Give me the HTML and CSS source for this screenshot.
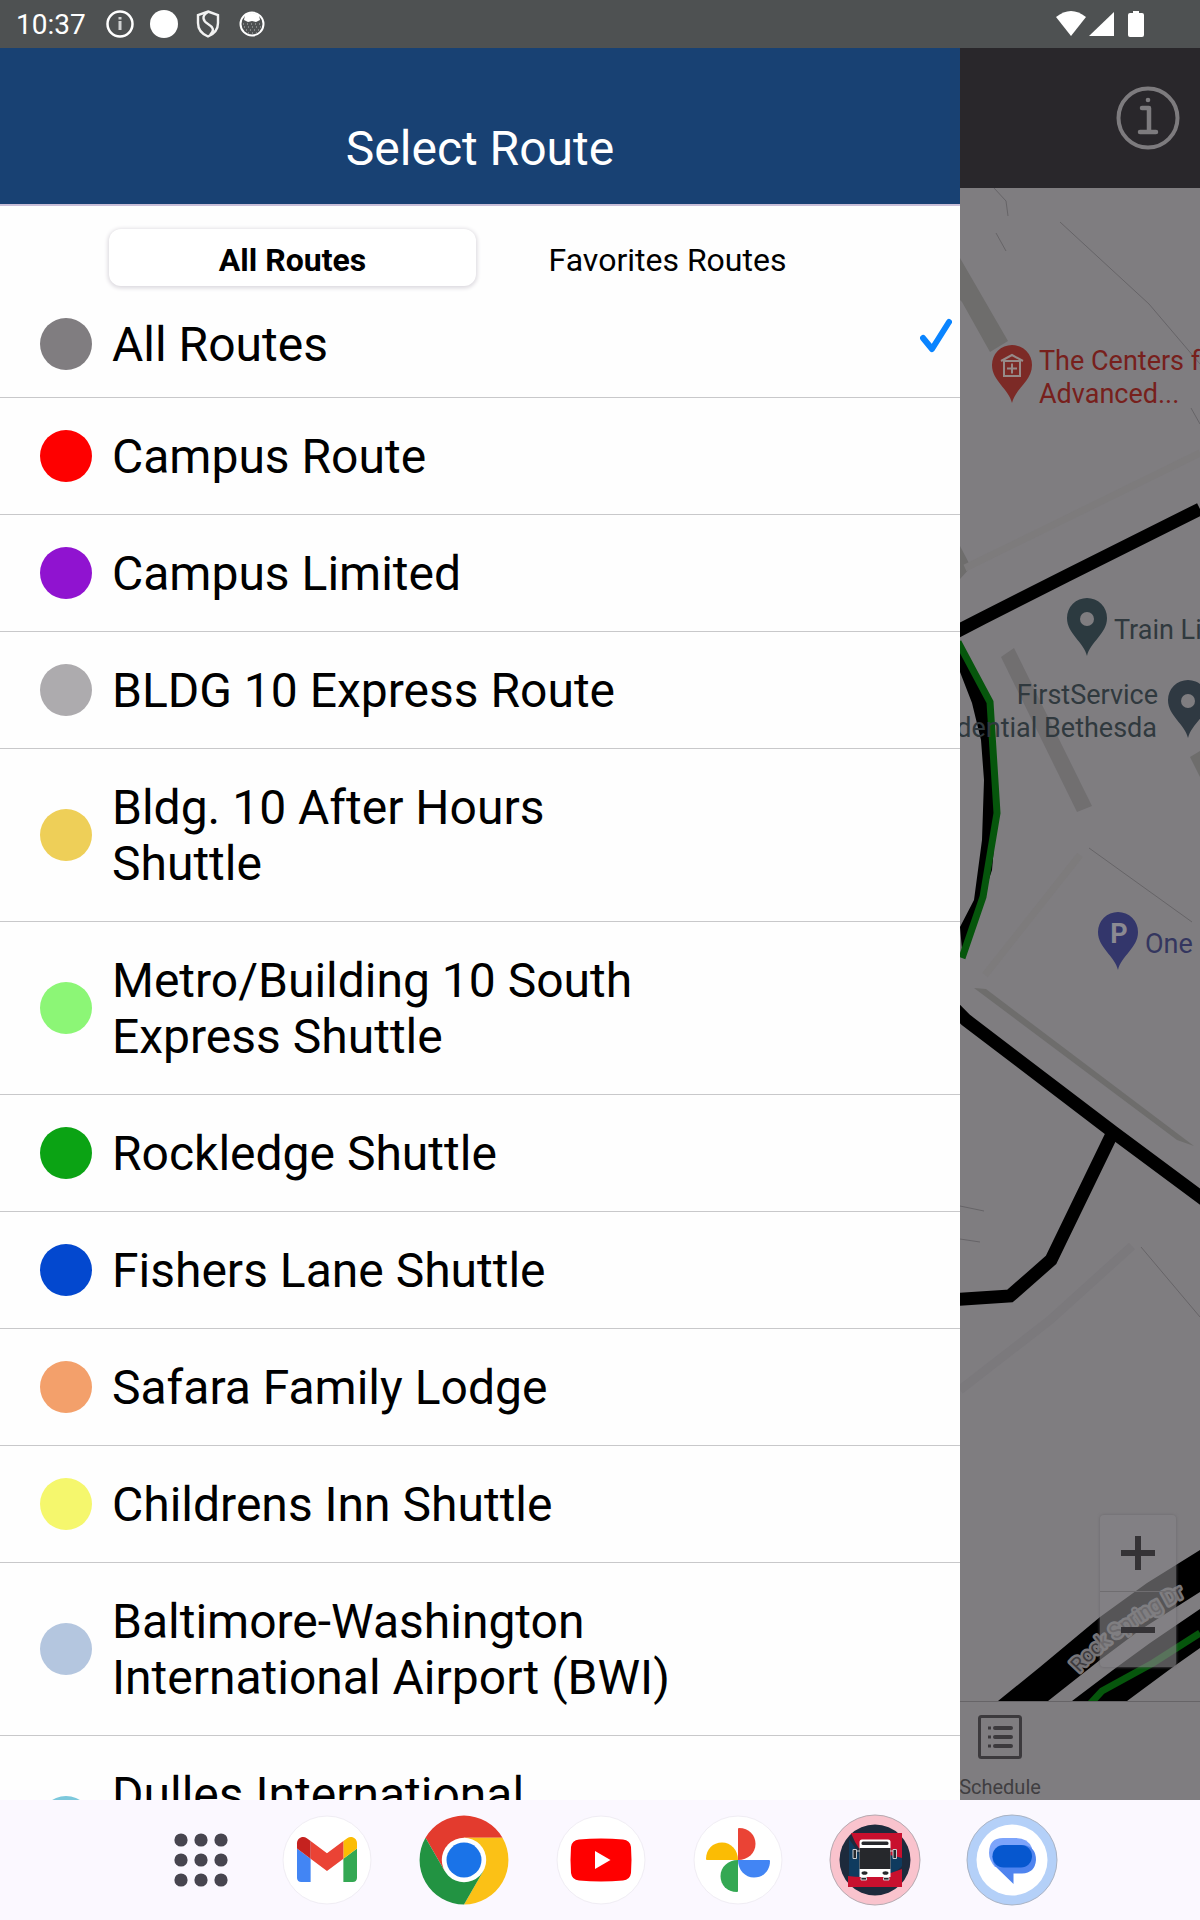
FILE: index.html
```html
<!DOCTYPE html>
<html lang="en">
<head>
  <meta charset="UTF-8">
  <meta name="viewport" content="width=device-width, initial-scale=1.0">
  <title>Select Route</title>
  <link rel="stylesheet" href="styles.css">
</head>
<body>
  <div class="statusbar">
    <span class="clock">10:37</span>
    <div class="notifications">
      <svg viewBox="-14 -14 28 28" width="28" height="28">
        <circle r="12.5" fill="none" stroke="#fff" stroke-width="2.5"/>
        <path d="M0-3V6M0-7v2.500" stroke="#d0d2d2" stroke-width="3"/>
      </svg>
      <svg viewBox="-14 -14 28 28" width="28" height="28"><circle r="14" fill="#fff"/></svg>
      <svg viewBox="-14 -14 28 28" width="28" height="28" fill="none" stroke="#f2f2f2" stroke-width="2.400">
        <path d="M0-12.500L10-9V-1C10 5 6 10 0 12.500C-6 10-10 5-10-1V-9Z"/>
        <path d="M0-12C-7-8-5-3 0 0S7 6 2 11" stroke-width="2.400"/>
      </svg>
      <svg viewBox="-14 -14 28 28" width="28" height="28">
        <circle r="11.500" fill="none" stroke="#fff" stroke-width="2"/>
        <path d="M-7-9Q0-13 7-9L8-4 4-2 0-3-4-2-8-4Z" fill="#fff"/>
        <path d="M-8 3h17M-6 6h13M-4 9h9M-9 0h18" stroke="#b8baba" stroke-width="1" stroke-dasharray="1 3"/>
      </svg>
    </div>
    <div class="system-icons">
      <svg viewBox="0 0 88 26" width="88" height="26" fill="#fff">
        <path d="M0 6Q15-6 30 6L15 25Z"/>
        <path d="M58 1V25H33Z"/>
        <path d="M77 0h6v2h3q2 0 2 2v20q0 2-2 2H74q-2 0-2-2V4q0-2 2-2h3Z"/>
      </svg>
    </div>
  </div>

  <main class="screen">
    <section class="drawer">
      <header class="drawer-header">
        <h1>Select Route</h1>
      </header>

      <div class="tabs" role="tablist">
        <button class="tab active" role="tab" aria-selected="true">All Routes</button>
        <button class="tab" role="tab" aria-selected="false">Favorites Routes</button>
      </div>

      <ul class="routes">
        <li><button class="route">
          <span class="dot gray"></span><span class="name">All Routes</span>
          <svg class="check" viewBox="0 0 32 42" width="32" height="42"><path d="M3 23L12 34L29 7" fill="none" stroke="#0a84ff" stroke-width="6" stroke-linecap="round" stroke-linejoin="round"/></svg>
        </button></li>
        <li><button class="route"><span class="dot red"></span><span class="name">Campus Route</span></button></li>
        <li><button class="route"><span class="dot purple"></span><span class="name">Campus Limited</span></button></li>
        <li><button class="route"><span class="dot silver"></span><span class="name">BLDG 10 Express Route</span></button></li>
        <li><button class="route"><span class="dot gold"></span><span class="name">Bldg. 10 After Hours Shuttle</span></button></li>
        <li><button class="route"><span class="dot lime"></span><span class="name">Metro/Building 10 South Express Shuttle</span></button></li>
        <li><button class="route"><span class="dot green"></span><span class="name">Rockledge Shuttle</span></button></li>
        <li><button class="route"><span class="dot blue"></span><span class="name">Fishers Lane Shuttle</span></button></li>
        <li><button class="route"><span class="dot orange"></span><span class="name">Safara Family Lodge</span></button></li>
        <li><button class="route"><span class="dot yellow"></span><span class="name">Childrens Inn Shuttle</span></button></li>
        <li><button class="route"><span class="dot steel"></span><span class="name">Baltimore-Washington International Airport (BWI)</span></button></li>
        <li><button class="route"><span class="dot cyan"></span><span class="name">Dulles International Airport</span></button></li>
      </ul>
    </section>

    <section class="app">
      <header class="app-header">
        <button class="info" aria-label="Info">
          <svg viewBox="-32 -32 64 64" width="64" height="64" fill="none" stroke="#7d7b7e" stroke-linecap="round" stroke-linejoin="round">
            <circle r="29.500" stroke-width="4"/>
            <path d="M-6-10H1V14M-8 14H8" stroke-width="4.500"/>
            <circle cy="-18" r="2.300" fill="#7d7b7e" stroke="none"/>
          </svg>
        </button>
      </header>

      <div class="map">
        <svg class="map-canvas" viewBox="960 188 240 1513" preserveAspectRatio="xMinYMin slice">
          <defs>
            <path id="pin" d="M0 38C-3 24-20 16-20 0A20 20 0 0 1 20 0C20 16 3 24 0 38Z"/>
            <path id="rockspring" d="M1079 1673Q1120 1628 1198 1590"/>
          </defs>

          <!-- buildings -->
          <g fill="#6e6d6c">
            <path d="M960 258L1008 341 990 352 962 302 960 300Z"/>
            <path d="M960 546L971 567 960 579Z"/>
            <path d="M1001 657L1014 648 1092 806 1077 812Z" fill="#716f70"/>
            <path d="M1190 757L1200 751V777Z"/>
            <path d="M974 988L986 989 1194 1146 1177 1140Z"/>
          </g>
          <g fill="none" stroke="#7d7b7c" stroke-width="7">
            <path d="M965 568L1200 453M985 975L1080 855"/>
            <path d="M960 1390L1050 1320 1132 1246" stroke-width="9" stroke="#7b797c"/>
          </g>
          <g fill="none" stroke="#666467" stroke-width="1">
            <path d="M994 188L1006 201 1008 216M996 233L1006 251"/>
            <path d="M1060 222L1149 304 1200 364M1191 408L1200 424"/>
            <path d="M1089 848L1192 922M1141 1247L1200 1317"/>
            <path d="M960 1206L984 1211M960 1239L980 1242"/>
          </g>

          <!-- routes -->
          <g fill="none" stroke="#000" stroke-width="13">
            <path d="M950 635L983 618 1066 576 1200 509"/>
            <path d="M950 1004L966 1020 1113 1132 1210 1204"/>
            <path d="M1113 1132L1051 1260 1010 1296 950 1300"/>
          </g>
          <path d="M960 645L990 702 997 813 992 870 983 897 962 950 960 927 974 900 982 840 984 780 981 740 972 703 960 672Z"/>
          <path d="M958 642L990 702 997 813 983 897 962 958" fill="none" stroke="#06560c" stroke-width="7"/>
          <path d="M998 1701L1040 1667 1100 1617 1147 1583 1200 1550V1592L1140 1630 1100 1660 1048 1701Z"/>
          <path d="M1072 1701L1113 1670 1150 1643 1200 1609V1648L1173 1667 1127 1701Z"/>
          <path d="M1090 1704L1102 1691 1153 1663 1200 1633" fill="none" stroke="#06560c" stroke-width="7"/>

          <text class="street"><textPath href="#rockspring">Rock Spring Dr</textPath></text>

          <g class="place medical">
            <use href="#pin" x="1012" y="365" fill="#7c2a26"/>
            <path d="M1001 361L1012 355 1023 361M1004 361H1020V376H1004ZM1012 363.500v10M1007 368.500h10" fill="none" stroke="#968a88" stroke-width="2"/>
            <text x="1039" y="370">The Centers f</text>
            <text x="1039" y="403">Advanced...</text>
          </g>
          <g class="place">
            <use href="#pin" x="1087" y="618" fill="#2c3a40"/>
            <circle cx="1087" cy="619" r="7" fill="#7f7d80"/>
            <text x="1114" y="639">Train Li</text>
          </g>
          <g class="place">
            <use href="#pin" x="1188" y="700" fill="#2f3942"/>
            <circle cx="1188" cy="701" r="7" fill="#7f7d80"/>
            <text x="1158" y="704" text-anchor="end">FirstService</text>
            <text x="1157" y="737" text-anchor="end">dential Bethesda</text>
          </g>
          <g class="place parking">
            <use href="#pin" x="1118" y="932" fill="#33366b"/>
            <text class="parking-mark" x="1119" y="943" text-anchor="middle">P</text>
            <text x="1145" y="953">One</text>
          </g>
        </svg>

        <div class="zoom">
          <button aria-label="Zoom in"><svg viewBox="-17 -17 34 34" width="34" height="34"><path d="M-17 0H17M0-17V17" stroke="#353336" stroke-width="6"/></svg></button>
          <button aria-label="Zoom out"><svg viewBox="-17 -17 34 34" width="34" height="34"><path d="M-17 0H17" stroke="#353336" stroke-width="6"/></svg></button>
        </div>
      </div>

      <nav class="tabbar">
        <button class="schedule">
          <svg viewBox="0 0 44 44" width="44" height="44" fill="none" stroke="#3c3a3d">
            <rect x="1.500" y="1.500" width="41" height="41" rx="2" stroke-width="3"/>
            <path d="M17 13H33M17 22H33M17 31H33" stroke-width="4" stroke-linecap="round"/>
            <path d="M10 13H13M10 22H13M10 31H13" stroke-width="3"/>
          </svg>
          Schedule
        </button>
      </nav>
    </section>
  </main>

  <nav class="dock">
    <button class="all-apps" aria-label="All apps">
      <svg viewBox="-27 -27 54 54" width="54" height="54" fill="#47454f">
        <circle cx="-20" cy="-20" r="6.600"/><circle cy="-20" r="6.600"/><circle cx="20" cy="-20" r="6.600"/>
        <circle cx="-20" r="6.600"/><circle r="6.600"/><circle cx="20" r="6.600"/>
        <circle cx="-20" cy="20" r="6.600"/><circle cy="20" r="6.600"/><circle cx="20" cy="20" r="6.600"/>
      </svg>
    </button>
    <button class="launcher" aria-label="Gmail">
      <svg viewBox="-45 -45 90 90">
        <circle class="plate" r="44"/>
        <svg x="-30" y="-23" width="60" height="45" viewBox="52 42 88 66">
          <path fill="#4285f4" d="M58 108h14V74L52 59v43c0 3.320 2.690 6 6 6"/>
          <path fill="#34a853" d="M120 108h14c3.320 0 6-2.690 6-6V59l-20 15"/>
          <path fill="#fbbc04" d="M120 48v26l20-15v-8c0-7.420-8.470-11.650-14.400-7.200"/>
          <path fill="#ea4335" d="M72 74V48l24 18 24-18v26L96 92"/>
          <path fill="#c5221f" d="M52 51v8l20 15V48l-5.600-4.200c-5.940-4.450-14.400-.22-14.400 7.200"/>
        </svg>
      </svg>
    </button>
    <button class="launcher" aria-label="Chrome">
      <svg viewBox="-45 -45 90 90">
        <path fill="#e33b2e" d="M-38.500-22.200A44.500 44.500 0 0 1 38.500-22.200H0L-19.300 11.100Z"/>
        <path fill="#fbc116" d="M38.500-22.200A44.500 44.500 0 0 1 0 44.500L19.300 11.100 0-22.200Z"/>
        <path fill="#229342" d="M0 44.500A44.500 44.500 0 0 1-38.500-22.200L-19.300 11.100H19.300Z"/>
        <circle r="22.200" fill="#fff"/>
        <circle r="17.500" fill="#1a73e8"/>
      </svg>
    </button>
    <button class="launcher" aria-label="YouTube">
      <svg viewBox="-45 -45 90 90">
        <circle class="plate" r="44"/>
        <path fill="#f00" d="M-22-20.500Q0-22.500 22-20.500Q29-20 30-13Q31 0 30 13Q29 20 22 20.500Q0 22.500-22 20.500Q-29 20-30 13Q-31 0-30-13Q-29-20-22-20.500Z"/>
        <path fill="#fff" d="M-6-9L9.500 0-6 9Z"/>
      </svg>
    </button>
    <button class="launcher" aria-label="Photos">
      <svg viewBox="-45 -45 90 90">
        <circle class="plate" r="44"/>
        <path fill="#ea4335" d="M0 0V-31Q0-32 1-32C11-32 17.500-25 17.500-16S10 0 0 0Z"/>
        <path fill="#4285f4" transform="rotate(90)" d="M0 0V-31Q0-32 1-32C11-32 17.500-25 17.500-16S10 0 0 0Z"/>
        <path fill="#34a853" transform="rotate(180)" d="M0 0V-31Q0-32 1-32C11-32 17.500-25 17.500-16S10 0 0 0Z"/>
        <path fill="#fbbc04" transform="rotate(270)" d="M0 0V-31Q0-32 1-32C11-32 17.500-25 17.500-16S10 0 0 0Z"/>
      </svg>
    </button>
    <button class="launcher" aria-label="Shuttle tracker">
      <svg viewBox="-45 -45 90 90">
        <circle r="45" fill="#f9c3cd" stroke="#b5a9b0"/>
        <circle r="35.500" fill="#1d2a3c"/>
        <path fill="#c8102e" d="M-24-27H27V-2L15 1V-10H-15L-20-18Z"/>
        <path fill="#0f3b5f" d="M-26-21L-15-5H15L27-2V6Q20 16-10 18L-26 17Z"/>
        <path fill="#c8102e" d="M-27 16Q0 20 27 9V27H-27Z"/>
        <path fill="#fff" d="M-13-20.500H13Q15.500-20.500 15.500-18V17H-15.500V-18Q-15.500-20.500-13-20.500Z"/>
        <path fill="#26282c" d="M-15.500-12H15.500V9H-15.500Z"/>
        <rect x="-13.500" y="-18.500" width="27" height="3.500" rx="1.500" fill="#26282c"/>
        <ellipse cx="-10.500" cy="13" rx="3" ry="1.800" fill="#26282c"/>
        <ellipse cx="10.500" cy="13" rx="3" ry="1.800" fill="#26282c"/>
        <path d="M-22-10.500h3.500v9H-22ZM18-10.500h3.500v9H18ZM-14 17.500h5.500v2.500H-14ZM8.500 17.500H14v2.500H8.500ZM-18-9h3M15-9h3" fill="#26282c" stroke="#c9ccd0" stroke-width="1"/>
      </svg>
    </button>
    <button class="launcher" aria-label="Messages">
      <svg viewBox="-45 -45 90 90">
        <circle r="45" fill="#b4d0f8" stroke="#a9b3c4"/>
        <circle r="35.500" fill="#fff"/>
        <path fill="#7da4fb" d="M-9-22H4Q16-22 20-12L16 7H-17Q-23 0-23-7Q-23-22-9-22Z"/>
        <path fill="#4f84ef" d="M-8-15H12Q24-13 24 0Q23 13 10 13.500H1.500V24L-16 7Q-20 2-19.500-4Z"/>
        <rect x="-19.500" y="-15" width="39.500" height="22.500" rx="11.200" fill="#0657cf"/>
      </svg>
    </button>
  </nav>
</body>
</html>
```
FILE: styles.css
```css
* {
  box-sizing: border-box;
}
body {
  margin: 0;
  height: 100vh;
  display: flex;
  flex-direction: column;
  font-family: Roboto, "Liberation Sans", sans-serif;
  color: #000;
  background: #fff;
  overflow: hidden;
}
button {
  border: none;
  padding: 0;
  background: none;
  font: inherit;
  color: inherit;
  cursor: pointer;
}
svg {
  display: block;
}

/* status bar */
.statusbar {
  flex: none;
  height: 48px;
  padding: 0 56px 0 16px;
  display: flex;
  align-items: center;
  gap: 20px;
  background: #4e5152;
  color: #fff;
}
.clock {
  font-size: 28px;
  line-height: 32px;
  padding-top: 2px;
}
.notifications {
  display: flex;
  gap: 16px;
}
.system-icons {
  margin-left: auto;
}

.screen {
  flex: 1;
  min-height: 0;
  display: flex;
}

/* route drawer */
.drawer {
  width: 80%;
  background: #fefefe;
  overflow: hidden;
}
.drawer-header {
  height: 158px;
  padding-top: 73px;
  background: #184173;
  border-bottom: 2px solid #c9bfd8;
  text-align: center;
}
.drawer-header h1 {
  margin: 0;
  font-size: 48px;
  line-height: 56px;
  font-weight: 400;
  color: #fff;
}
.tabs {
  display: flex;
  padding: 23px 109px 0;
}
.tab {
  flex: 1;
  height: 57px;
  padding-top: 4px;
  border-radius: 12px;
  font-size: 32px;
  line-height: 40px;
}
.tab + .tab {
  margin-left: 8px;
}
.tab.active {
  font-weight: 700;
  background: #fff;
  box-shadow: 0 1px 4px 1px #d9d6dc;
}
.routes {
  margin: 0;
  padding: 0;
  list-style: none;
}
.route {
  display: flex;
  align-items: center;
  width: 100%;
  padding: 29px 8px 29px 40px;
  border-bottom: 1px solid #c8c8ca;
  text-align: left;
}
.routes li:first-child .route {
  padding-bottom: 24px;
}
.dot {
  flex: none;
  width: 52px;
  height: 52px;
  margin-right: 20px;
  border-radius: 50%;
}
.name {
  max-width: 570px;
  padding-top: 2px;
  font-size: 48px;
  line-height: 56px;
}
.check {
  align-self: flex-start;
  margin-left: auto;
}
.gray { background: #807d80; }
.red { background: #fe0000; }
.purple { background: #9013d0; }
.silver { background: #adabae; }
.gold { background: #eecf58; }
.lime { background: #8cf676; }
.green { background: #0ba314; }
.blue { background: #0348cf; }
.orange { background: #f3a06b; }
.yellow { background: #f5f76d; }
.steel { background: #b4c6df; }
.cyan { background: #7cc8dc; }

/* dimmed app behind the drawer */
.app {
  width: 20%;
  display: flex;
  flex-direction: column;
  overflow: hidden;
  background: #7f7d80;
}
.app-header {
  flex: none;
  height: 140px;
  padding-right: 20px;
  display: flex;
  align-items: center;
  justify-content: flex-end;
  background: #29272b;
}
.map {
  flex: 1;
  min-height: 0;
  position: relative;
  overflow: hidden;
}
.map-canvas {
  width: 100%;
  height: 100%;
}
.place {
  font-size: 27px;
  fill: #30393e;
}
.medical {
  fill: #77201c;
}
.parking {
  fill: #34365f;
}
.parking-mark {
  font-weight: 700;
  fill: #8b8a92;
}
.street {
  font-size: 20px;
  fill: #3f3d40;
  stroke: #777578;
  stroke-width: 5px;
  stroke-linejoin: round;
  paint-order: stroke;
}
.zoom {
  position: absolute;
  right: 24px;
  bottom: 34px;
  width: 76px;
  background: rgba(132, 130, 133, 0.65);
  box-shadow: 0 0 3px #6a686b;
  border-radius: 4px;
}
.zoom button {
  display: flex;
  align-items: center;
  justify-content: center;
  width: 76px;
  height: 76px;
}
.zoom button + button {
  border-top: 1px solid #6f6d70;
}
.tabbar {
  flex: none;
  height: 99px;
  border-top: 1px solid #666467;
}
.schedule {
  display: flex;
  flex-direction: column;
  align-items: center;
  gap: 16px;
  width: 80px;
  padding-top: 13px;
  font-size: 20px;
  line-height: 24px;
  color: #403e41;
}

/* launcher dock */
.dock {
  flex: none;
  height: 120px;
  display: flex;
  align-items: center;
  gap: 47px;
  padding-left: 14.5%;
  background: #fbf8ff;
}
.all-apps {
  margin-right: 7px;
}
.launcher {
  width: 90px;
  height: 90px;
}
.launcher svg {
  overflow: visible;
}
.plate {
  fill: #fff;
  stroke: #f0edf4;
}
```
